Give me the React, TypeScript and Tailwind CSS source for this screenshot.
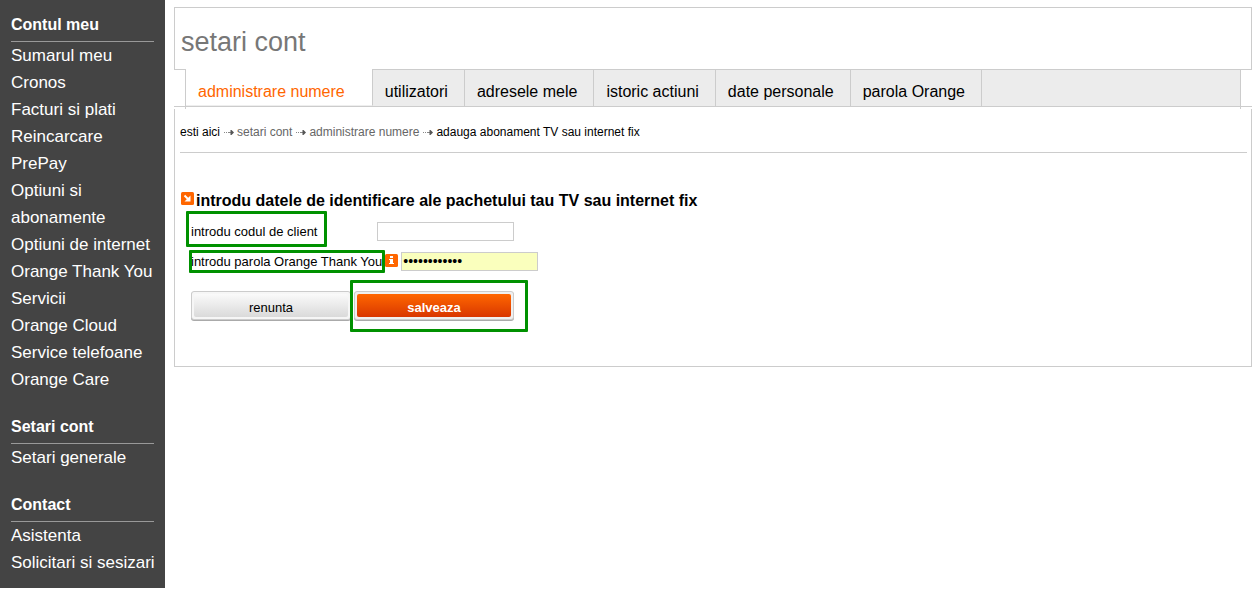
import { Fragment } from "react";
import type { ReactNode } from "react";

const menu = [
  {
    title: "Contul meu",
    items: [
      "Sumarul meu",
      "Cronos",
      "Facturi si plati",
      "Reincarcare PrePay",
      "Optiuni si abonamente",
      "Optiuni de internet",
      "Orange Thank You",
      "Servicii",
      "Orange Cloud",
      "Service telefoane",
      "Orange Care",
    ],
  },
  { title: "Setari cont", items: ["Setari generale"] },
  { title: "Contact", items: ["Asistenta", "Solicitari si sesizari"] },
];

const tabs = ["utilizatori", "adresele mele", "istoric actiuni", "date personale", "parola Orange"];

const crumbs = ["setari cont", "administrare numere"];

function Sidebar() {
  return (
    <aside className="w-[165px] shrink-0 bg-[#444] px-[11px] pt-[11px] pb-3 text-white">
      <nav className="flex flex-col gap-5 text-[17px] leading-[27px]">
        {menu.map((group) => (
          <section key={group.title}>
            <h2 className="border-b border-[#999] pb-[3px] text-[16px] font-bold leading-[27px]">{group.title}</h2>
            <ul className="-mr-1">
              {group.items.map((item) => (
                <li key={item}>
                  <a href="#">{item}</a>
                </li>
              ))}
            </ul>
          </section>
        ))}
      </nav>
    </aside>
  );
}

function Tabs() {
  return (
    <div className="border-b border-[#ccc]">
      <div className="flex">
        <div className="w-[11px] border-t border-[#ccc]" />
        <nav className="flex flex-1 border-x border-[#ccc] text-[16px] leading-6">
          <a href="#" className="border-r border-b border-r-[#ccc] border-b-[#eee] pt-[11px] pr-[27px] pb-px pl-3 text-[#f60]">
            administrare numere
          </a>
          {tabs.map((tab) => (
            <a
              key={tab}
              href="#"
              className="border-t border-r border-[#ccc] bg-[#ececec] pt-[10px] pr-4 pb-[2px] pl-3 text-black"
            >
              {tab}
            </a>
          ))}
          <div className="flex-1 border-t border-[#ccc] bg-[#ececec]" />
        </nav>
        <div className="w-[11px] border-t border-[#ccc]" />
      </div>
    </div>
  );
}

function CrumbArrow() {
  return (
    <svg width="10" height="7" viewBox="0 0 10 7" className="mr-[3px] ml-1 inline-block" aria-hidden="true">
      <path d="M0 3h1v1H0zM2 3h1v1H2zM4 3h3v1H4z" fill="#888" />
      <path d="M6.5 1h1L10 3.5 7.5 6h-1z" fill="#555" />
    </svg>
  );
}

function Breadcrumb() {
  return (
    <nav className="border-b border-[#ccc] pb-3 text-[12px] leading-4 text-black">
      esti aici
      {crumbs.map((crumb) => (
        <Fragment key={crumb}>
          <CrumbArrow />
          <a href="#" className="text-[#666]">
            {crumb}
          </a>
        </Fragment>
      ))}
      <CrumbArrow />
      adauga abonament TV sau internet fix
    </nav>
  );
}

function ArrowIcon() {
  return (
    <svg width="13" height="13" viewBox="0 0 13 13" className="mb-[6px]" aria-hidden="true">
      <rect width="13" height="13" rx="1.5" fill="#f60" />
      <path d="M3.5 3.5l4 4" stroke="#fff" strokeWidth="2" />
      <path d="M9.5 3.5v6h-6z" fill="#fff" />
    </svg>
  );
}

function InfoIcon() {
  return (
    <svg width="13" height="13" viewBox="0 0 13 13" className="mb-[3px]" aria-hidden="true">
      <rect width="13" height="13" rx="1.5" fill="#f60" />
      <path d="M5 2h3v2H5zM4 5h4v4h1v1H4V9h1V6H4z" fill="#fff" />
    </svg>
  );
}

// green frame drawn over the element it marks
function Marked({ className, children }: { className: string; children: ReactNode }) {
  return (
    <div className="relative">
      {children}
      <span className={`pointer-events-none absolute rounded-[1px] border-3 border-[#009100] ${className}`} />
    </div>
  );
}

const inputClass = "h-[19px] w-[137px] border border-[#ccc] px-px text-black outline-none";
const buttonClass = "h-[29px] w-[160px] rounded-[3px] border border-[#ccc] p-[2px] shadow-[0_1px_0_#aaa]";

export default function App() {
  return (
    <div className="flex items-start bg-white font-['Liberation_Sans',Arial,sans-serif]">
      <Sidebar />
      <main className="mt-[7px] mr-[2px] ml-[9px] flex-1">
        <header className="border-x border-t border-[#ccc] pt-[18px] pb-[11px] pl-[6px]">
          <h1 className="text-[27px] leading-8 text-[#777]">setari cont</h1>
        </header>
        <Tabs />
        <div className="mx-[11px] h-[2px] border-x border-[#ccc]" />
        <div className="border-x border-b border-[#ccc] pt-[15px] pr-1 pb-[46px] pl-[5px]">
          <Breadcrumb />
          <h2 className="mt-[36px] flex items-center gap-[2px] pl-px text-[16px] font-bold leading-6 text-black">
            <ArrowIcon />
            introdu datele de identificare ale pachetului tau TV sau internet fix
          </h2>
          <form className="mt-[9px] pl-[11px] text-[13px] text-black" onSubmit={(e) => e.preventDefault()}>
            <div className="flex items-center">
              <div className="flex w-[186px]">
                <Marked className="-top-[11px] -right-[10px] -bottom-[6px] -left-[5px]">
                  <label htmlFor="client" className="block leading-[19px]">
                    introdu codul de client
                  </label>
                </Marked>
              </div>
              <input id="client" type="text" className={`${inputClass} bg-white text-[13px]`} />
            </div>
            <div className="mt-[11px] flex items-center gap-[3px]">
              <Marked className="-top-[2px] -right-[3px] -bottom-[2px] -left-[2px]">
                <label htmlFor="parola" className="block leading-[19px]">
                  introdu parola Orange Thank You
                </label>
              </Marked>
              <InfoIcon />
              <input
                id="parola"
                type="password"
                defaultValue="abcdefghijkl"
                className={`${inputClass} bg-[#faffbd] text-[14px]`}
              />
            </div>
            <div className="mt-5 flex gap-[3px]">
              <button type="button" className={`${buttonClass} bg-[#f6f6f6]`}>
                <span className="block h-full rounded-[2px] bg-linear-to-b from-[#fafafa] to-[#dadada] leading-[27px]">
                  renunta
                </span>
              </button>
              <Marked className="-top-[11px] -right-[14px] -bottom-[12px] -left-[4px]">
                <button type="submit" className={`${buttonClass} block bg-[#f0f0f0] font-bold text-white`}>
                  <span className="block h-full rounded-[2px] bg-linear-to-b from-[#ff6600] to-[#d93600] leading-[27px]">
                    salveaza
                  </span>
                </button>
              </Marked>
            </div>
          </form>
        </div>
      </main>
    </div>
  );
}
